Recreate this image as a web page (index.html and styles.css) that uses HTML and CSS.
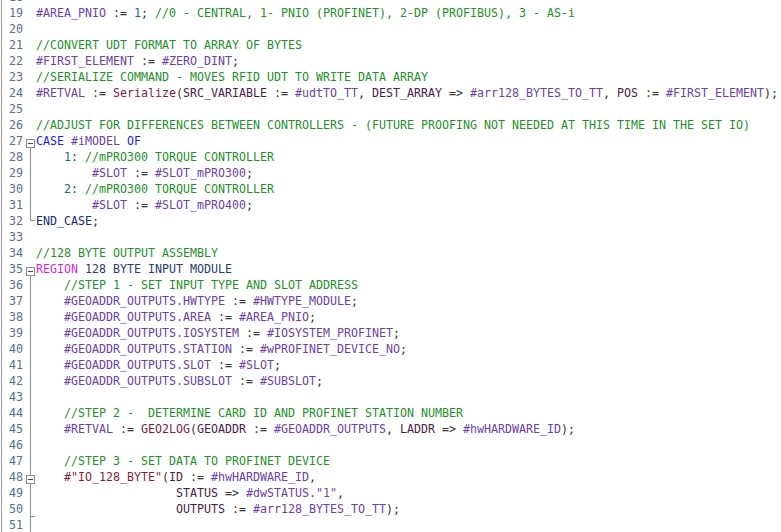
FILE: index.html
```html
<!DOCTYPE html>
<html>
<head>
<meta charset="utf-8">
<link rel="stylesheet" href="styles.css">
</head>
<body>
<div class="editor">
<div class="lines">
<div class="row"><span class="ln">18</span><span class="fold"></span><span class="code"></span></div>
<div class="row"><span class="ln">19</span><span class="fold"></span><span class="code"><span class="v">#AREA_PNIO</span><span class="o"> := </span><span class="n">1</span><span class="o">; </span><span class="c">//0 - CENTRAL, 1- PNIO (PROFINET), 2-DP (PROFIBUS), 3 - AS-i</span></span></div>
<div class="row"><span class="ln">20</span><span class="fold"></span><span class="code"></span></div>
<div class="row"><span class="ln">21</span><span class="fold"></span><span class="code"><span class="c">//CONVERT UDT FORMAT TO ARRAY OF BYTES</span></span></div>
<div class="row"><span class="ln">22</span><span class="fold"></span><span class="code"><span class="v">#FIRST_ELEMENT</span><span class="o"> := </span><span class="v">#ZERO_DINT</span><span class="o">;</span></span></div>
<div class="row"><span class="ln">23</span><span class="fold"></span><span class="code"><span class="c">//SERIALIZE COMMAND - MOVES RFID UDT TO WRITE DATA ARRAY</span></span></div>
<div class="row"><span class="ln">24</span><span class="fold"></span><span class="code"><span class="v">#RETVAL</span><span class="o"> := </span><span class="f">Serialize</span><span class="o">(</span><span class="p">SRC_VARIABLE</span><span class="o"> := </span><span class="v">#udtTO_TT</span><span class="o">, </span><span class="p">DEST_ARRAY</span><span class="o"> =&gt; </span><span class="v">#arr128_BYTES_TO_TT</span><span class="o">, </span><span class="p">POS</span><span class="o"> := </span><span class="v">#FIRST_ELEMENT</span><span class="o">);</span></span></div>
<div class="row"><span class="ln">25</span><span class="fold"></span><span class="code"></span></div>
<div class="row"><span class="ln">26</span><span class="fold"></span><span class="code"><span class="c">//ADJUST FOR DIFFERENCES BETWEEN CONTROLLERS - (FUTURE PROOFING NOT NEEDED AT THIS TIME IN THE SET IO)</span></span></div>
<div class="row"><span class="ln">27</span><span class="fold start"><span class="box"></span></span><span class="code"><span class="k">CASE</span><span class="o"> </span><span class="v">#iMODEL</span><span class="o"> </span><span class="k">OF</span></span></div>
<div class="row"><span class="ln">28</span><span class="fold mid"></span><span class="code"><span class="o">    </span><span class="n">1</span><span class="o">: </span><span class="c">//mPRO300 TORQUE CONTROLLER</span></span></div>
<div class="row"><span class="ln">29</span><span class="fold mid"></span><span class="code"><span class="o">        </span><span class="v">#SLOT</span><span class="o"> := </span><span class="v">#SLOT_mPRO300</span><span class="o">;</span></span></div>
<div class="row"><span class="ln">30</span><span class="fold mid"></span><span class="code"><span class="o">    </span><span class="n">2</span><span class="o">: </span><span class="c">//mPRO300 TORQUE CONTROLLER</span></span></div>
<div class="row"><span class="ln">31</span><span class="fold mid"></span><span class="code"><span class="o">        </span><span class="v">#SLOT</span><span class="o"> := </span><span class="v">#SLOT_mPRO400</span><span class="o">;</span></span></div>
<div class="row"><span class="ln">32</span><span class="fold end"></span><span class="code"><span class="ke">END_CASE</span><span class="o">;</span></span></div>
<div class="row"><span class="ln">33</span><span class="fold"></span><span class="code"></span></div>
<div class="row"><span class="ln">34</span><span class="fold"></span><span class="code"><span class="c">//128 BYTE OUTPUT ASSEMBLY</span></span></div>
<div class="row"><span class="ln">35</span><span class="fold start"><span class="box"></span></span><span class="code"><span class="r">REGION</span><span class="rn"> 128 BYTE INPUT MODULE</span></span></div>
<div class="row"><span class="ln">36</span><span class="fold mid"></span><span class="code"><span class="o">    </span><span class="c">//STEP 1 - SET INPUT TYPE AND SLOT ADDRESS</span></span></div>
<div class="row"><span class="ln">37</span><span class="fold mid"></span><span class="code"><span class="o">    </span><span class="v">#GEOADDR_OUTPUTS.HWTYPE</span><span class="o"> := </span><span class="v">#HWTYPE_MODULE</span><span class="o">;</span></span></div>
<div class="row"><span class="ln">38</span><span class="fold mid"></span><span class="code"><span class="o">    </span><span class="v">#GEOADDR_OUTPUTS.AREA</span><span class="o"> := </span><span class="v">#AREA_PNIO</span><span class="o">;</span></span></div>
<div class="row"><span class="ln">39</span><span class="fold mid"></span><span class="code"><span class="o">    </span><span class="v">#GEOADDR_OUTPUTS.IOSYSTEM</span><span class="o"> := </span><span class="v">#IOSYSTEM_PROFINET</span><span class="o">;</span></span></div>
<div class="row"><span class="ln">40</span><span class="fold mid"></span><span class="code"><span class="o">    </span><span class="v">#GEOADDR_OUTPUTS.STATION</span><span class="o"> := </span><span class="v">#wPROFINET_DEVICE_NO</span><span class="o">;</span></span></div>
<div class="row"><span class="ln">41</span><span class="fold mid"></span><span class="code"><span class="o">    </span><span class="v">#GEOADDR_OUTPUTS.SLOT</span><span class="o"> := </span><span class="v">#SLOT</span><span class="o">;</span></span></div>
<div class="row"><span class="ln">42</span><span class="fold mid"></span><span class="code"><span class="o">    </span><span class="v">#GEOADDR_OUTPUTS.SUBSLOT</span><span class="o"> := </span><span class="v">#SUBSLOT</span><span class="o">;</span></span></div>
<div class="row"><span class="ln">43</span><span class="fold mid"></span><span class="code"></span></div>
<div class="row"><span class="ln">44</span><span class="fold mid"></span><span class="code"><span class="o">    </span><span class="c">//STEP 2 -  DETERMINE CARD ID AND PROFINET STATION NUMBER</span></span></div>
<div class="row"><span class="ln">45</span><span class="fold mid"></span><span class="code"><span class="o">    </span><span class="v">#RETVAL</span><span class="o"> := </span><span class="f">GEO2LOG</span><span class="o">(</span><span class="p">GEOADDR</span><span class="o"> := </span><span class="v">#GEOADDR_OUTPUTS</span><span class="o">, </span><span class="p">LADDR</span><span class="o"> =&gt; </span><span class="v">#hwHARDWARE_ID</span><span class="o">);</span></span></div>
<div class="row"><span class="ln">46</span><span class="fold mid"></span><span class="code"></span></div>
<div class="row"><span class="ln">47</span><span class="fold mid"></span><span class="code"><span class="o">    </span><span class="c">//STEP 3 - SET DATA TO PROFINET DEVICE</span></span></div>
<div class="row"><span class="ln">48</span><span class="fold start inner"><span class="box"></span></span><span class="code"><span class="o">    </span><span class="s">#"IO_128_BYTE"</span><span class="o">(</span><span class="p">ID</span><span class="o"> := </span><span class="v">#hwHARDWARE_ID</span><span class="o">,</span></span></div>
<div class="row"><span class="ln">49</span><span class="fold mid"></span><span class="code"><span class="o">                    </span><span class="p">STATUS</span><span class="o"> =&gt; </span><span class="v">#dwSTATUS."1"</span><span class="o">,</span></span></div>
<div class="row"><span class="ln">50</span><span class="fold mid tick"></span><span class="code"><span class="o">                    </span><span class="p">OUTPUTS</span><span class="o"> := </span><span class="v">#arr128_BYTES_TO_TT</span><span class="o">);</span></span></div>
<div class="row"><span class="ln">51</span><span class="fold mid"></span><span class="code"></span></div>
</div>
</div>
</body>
</html>
```
FILE: styles.css
```css
html, body {
  margin: 0;
  padding: 0;
  background: #ffffff;
  overflow: hidden;
}

.editor {
  margin-left: 1px;
  border-left: 1px solid #9d9d9d;
  height: 532px;
  overflow: hidden;
  font-family: "DejaVu Sans Mono", monospace;
  font-size: 11.63px;
}

.lines {
  margin-top: -11px;
}

.row {
  display: grid;
  grid-template-columns: 21px 13px 1fr;
  height: 16px;
  line-height: 16px;
}

.ln {
  padding-left: 7px;
  color: #56708a;
}

.fold {
  position: relative;
}

.code {
  white-space: pre;
  color: #333333;
}

.fold.mid::before {
  content: "";
  position: absolute;
  left: 7px;
  top: 0;
  bottom: 0;
  width: 1px;
  background: #8c8c8c;
}

.fold.tick::after {
  content: "";
  position: absolute;
  left: 7px;
  top: 15px;
  width: 5px;
  height: 1px;
  background: #8c8c8c;
}

.fold.end::before {
  content: "";
  position: absolute;
  left: 7px;
  top: 0;
  height: 8px;
  width: 1px;
  background: #8c8c8c;
}

.fold.end::after {
  content: "";
  position: absolute;
  left: 7px;
  top: 7px;
  width: 5px;
  height: 1px;
  background: #8c8c8c;
}

.fold.start::after {
  content: "";
  position: absolute;
  left: 7px;
  top: 15px;
  bottom: 0;
  width: 1px;
  background: #8c8c8c;
}

.fold.inner::before {
  content: "";
  position: absolute;
  left: 7px;
  top: 0;
  height: 6px;
  width: 1px;
  background: #8c8c8c;
}

.box {
  position: absolute;
  left: 3px;
  top: 6px;
  width: 9px;
  height: 9px;
  box-sizing: border-box;
  border: 1px solid #8c8c8c;
  background: #ffffff;
}

.box::before {
  content: "";
  position: absolute;
  left: 1px;
  top: 3px;
  width: 5px;
  height: 1px;
  background: #4a4a4a;
}

.v { color: #6a42a6; }
.o { color: #333333; }
.n { color: #1e5fa8; }
.c { color: #24902a; }
.k { color: #1a1aff; }
.ke { color: #1c2a80; }
.r { color: #d81fd8; }
.rn { color: #2c3a6c; }
.f { color: #7a1e48; }
.p { color: #4b1d45; }
.s { color: #8b1c3c; }
```
